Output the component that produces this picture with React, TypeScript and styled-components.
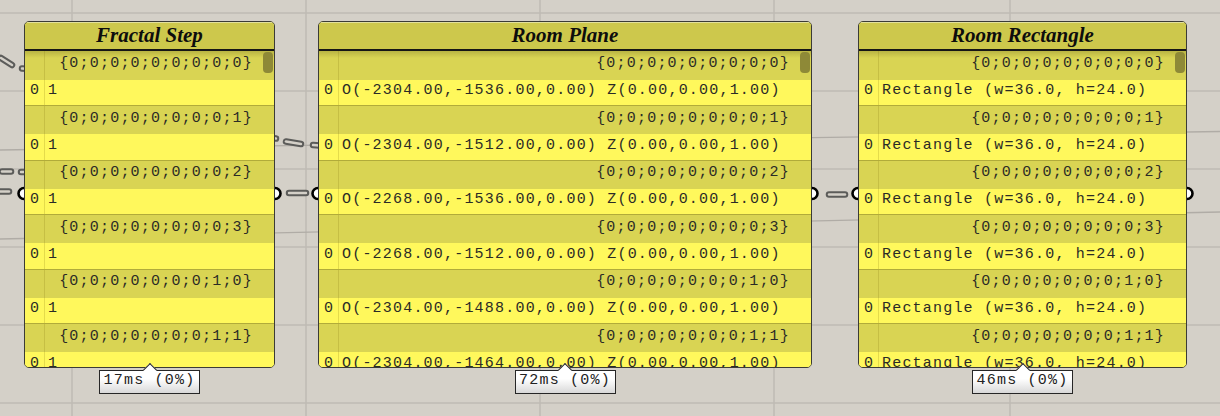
import styled, { createGlobalStyle, css } from 'styled-components'

const GlobalStyle = createGlobalStyle`
  html, body {
    margin: 0;
    padding: 0;
    background: #d4d0c8;
  }
`

const mono = css`
  font-family: 'Liberation Mono', 'DejaVu Sans Mono', monospace;
  font-size: 15px;
  letter-spacing: 1.2px;
  color: #2b2b26;
  white-space: pre;
`

const Canvas = styled.div`
  position: relative;
  width: 1220px;
  height: 416px;
  overflow: hidden;
  background: #d4d0c8;
`

const Backdrop = styled.svg`
  position: absolute;
  left: 0;
  top: 0;
`

const Node = styled.div<{ $x: number; $w: number }>`
  position: absolute;
  top: 21px;
  left: ${({ $x }) => $x}px;
  width: ${({ $w }) => $w}px;
`

const Panel = styled.div`
  position: relative;
  height: 347px;
  box-sizing: border-box;
  border: 1px solid #3b3b36;
  border-radius: 5px;
  background: #fff85c;
  overflow: hidden;
`

const Title = styled.div`
  height: 27px;
  line-height: 26px;
  border-bottom: 2px solid #161616;
  background: #cdc84c;
  box-shadow: inset 0 1px 0 rgba(255, 255, 255, 0.45);
  text-align: center;
  font-family: 'Liberation Serif', 'Times New Roman', serif;
  font-size: 21px;
  font-style: italic;
  font-weight: bold;
  color: #0d0d0d;
`

const PathRow = styled.div<{ $first?: boolean }>`
  display: flex;
  box-sizing: border-box;
  height: ${({ $first }) => ($first ? 28.5 : 29)}px;
  border-top: ${({ $first }) => ($first ? 'none' : '1px solid #b1ab3a')};
  background: ${({ $first }) =>
    $first ? 'linear-gradient(#b9b443, #d9d453 7px)' : '#d9d453'};
`

const DataRow = styled.div`
  display: flex;
  height: 25.5px;
  background: #fff85c;
`

const Index = styled.div<{ $pad: number }>`
  ${mono}
  flex: none;
  width: 20px;
  display: flex;
  align-items: center;
  justify-content: center;
  box-sizing: border-box;
  padding-bottom: ${({ $pad }) => $pad}px;
  border-right: 1px solid rgba(130, 120, 20, 0.22);
  letter-spacing: 0;
`

const PathText = styled.div`
  ${mono}
  flex: 1;
  display: flex;
  align-items: center;
  justify-content: flex-end;
  padding: 0 21px 4px 0;
`

const DataText = styled.div`
  ${mono}
  flex: 1;
  display: flex;
  align-items: center;
  padding: 0 0 3px 3px;
`

const Thumb = styled.div`
  position: absolute;
  top: 30px;
  right: 1px;
  width: 10px;
  height: 21px;
  border-radius: 4px;
  background: #8e8937;
`

const Timer = styled.div`
  position: relative;
  width: 101px;
  height: 24px;
  margin: 2px auto 0;
  box-sizing: border-box;
  border: 1px solid #262626;
  background: linear-gradient(#ffffff 35%, #d8d8d8);
  text-align: center;
  ${mono}
  color: #222;
  line-height: 20px;

  &::before {
    content: '';
    position: absolute;
    left: 50%;
    top: -6px;
    width: 10px;
    height: 10px;
    margin-left: -5px;
    box-sizing: border-box;
    border-left: 1px solid #262626;
    border-top: 1px solid #262626;
    background: #fff;
    transform: rotate(45deg);
  }
`

const TimerLabel = styled.span`
  position: relative;
`

const paths = [
  '{0;0;0;0;0;0;0;0;0}',
  '{0;0;0;0;0;0;0;0;1}',
  '{0;0;0;0;0;0;0;0;2}',
  '{0;0;0;0;0;0;0;0;3}',
  '{0;0;0;0;0;0;0;1;0}',
  '{0;0;0;0;0;0;0;1;1}',
]

const origins = [
  [-2304, -1536],
  [-2304, -1512],
  [-2268, -1536],
  [-2268, -1512],
  [-2304, -1488],
  [-2304, -1464],
]

const planes = origins.map(
  ([x, y]) => `O(${x.toFixed(2)},${y.toFixed(2)},0.00) Z(0.00,0.00,1.00)`
)

interface NodeProps {
  x: number
  w: number
  title: string
  values: string[]
  time: string
}

const DataNode = ({ x, w, title, values, time }: NodeProps) => (
  <Node $x={x} $w={w}>
    <Panel>
      <Title>{title}</Title>
      {paths.map((path, i) => (
        <div key={path}>
          <PathRow $first={i === 0}>
            <Index $pad={4} />
            <PathText>{path}</PathText>
          </PathRow>
          <DataRow>
            <Index $pad={3}>0</Index>
            <DataText>{values[i]}</DataText>
          </DataRow>
        </div>
      ))}
      <Thumb />
    </Panel>
    <Timer>
      <TimerLabel>{time}</TimerLabel>
    </Timer>
  </Node>
)

interface SegmentProps {
  x1: number
  y1: number
  x2: number
  y2: number
}

// faint wire drawn as hollow dashes
const Dash = ({ x1, y1, x2, y2 }: SegmentProps) => (
  <g strokeLinecap="round">
    <line x1={x1} y1={y1} x2={x2} y2={y2} stroke="#5c5c5a" strokeWidth={6.5} />
    <line x1={x1} y1={y1} x2={x2} y2={y2} stroke="#d4d0c8" strokeWidth={2.4} />
  </g>
)

const dashes: SegmentProps[] = [
  { x1: 1, y1: 58, x2: 12, y2: 65 },
  { x1: 22, y1: 68.5, x2: 32, y2: 69 },
  { x1: 2, y1: 171.5, x2: 11, y2: 171.5 },
  { x1: 21, y1: 172, x2: 31, y2: 172 },
  { x1: -4, y1: 191.5, x2: 9, y2: 191.5 },
  { x1: 264, y1: 137, x2: 276, y2: 138.5 },
  { x1: 286, y1: 141.5, x2: 301, y2: 144 },
  { x1: 313, y1: 145, x2: 326, y2: 146 },
  { x1: 289, y1: 193, x2: 306, y2: 193 },
  { x1: 829, y1: 194.5, x2: 845, y2: 194.5 },
]

const grips = [24, 275, 318, 812, 858, 1187]

const App = () => {
  const ones = paths.map(() => '1')
  const rects = paths.map(() => 'Rectangle (w=36.0, h=24.0)')

  return (
    <Canvas>
      <GlobalStyle />
      <Backdrop width={1220} height={416}>
        <g stroke="#bfbbb4" strokeWidth={1.5}>
          {[72, 306, 540, 774, 1010].map((x) => (
            <line key={`v${x}`} x1={x} y1={0} x2={x} y2={416} />
          ))}
          {[13, 91, 169, 247, 325, 403].map((y) => (
            <line key={`h${y}`} x1={0} y1={y} x2={1220} y2={y} />
          ))}
        </g>
        <g stroke="#b0aca6" strokeWidth={1.3}>
          <line x1={0} y1={150} x2={1220} y2={131.5} />
          <line x1={0} y1={239} x2={1220} y2={212} />
        </g>
        {dashes.map((d, i) => (
          <Dash key={i} {...d} />
        ))}
        {grips.map((x) => (
          <circle key={x} cx={x} cy={193.5} r={5.5} fill="#fff" stroke="#000" strokeWidth={2.6} />
        ))}
      </Backdrop>
      <DataNode x={24} w={251} title="Fractal Step" values={ones} time="17ms (0%)" />
      <DataNode x={318} w={494} title="Room Plane" values={planes} time="72ms (0%)" />
      <DataNode x={858} w={329} title="Room Rectangle" values={rects} time="46ms (0%)" />
    </Canvas>
  )
}

export default App
